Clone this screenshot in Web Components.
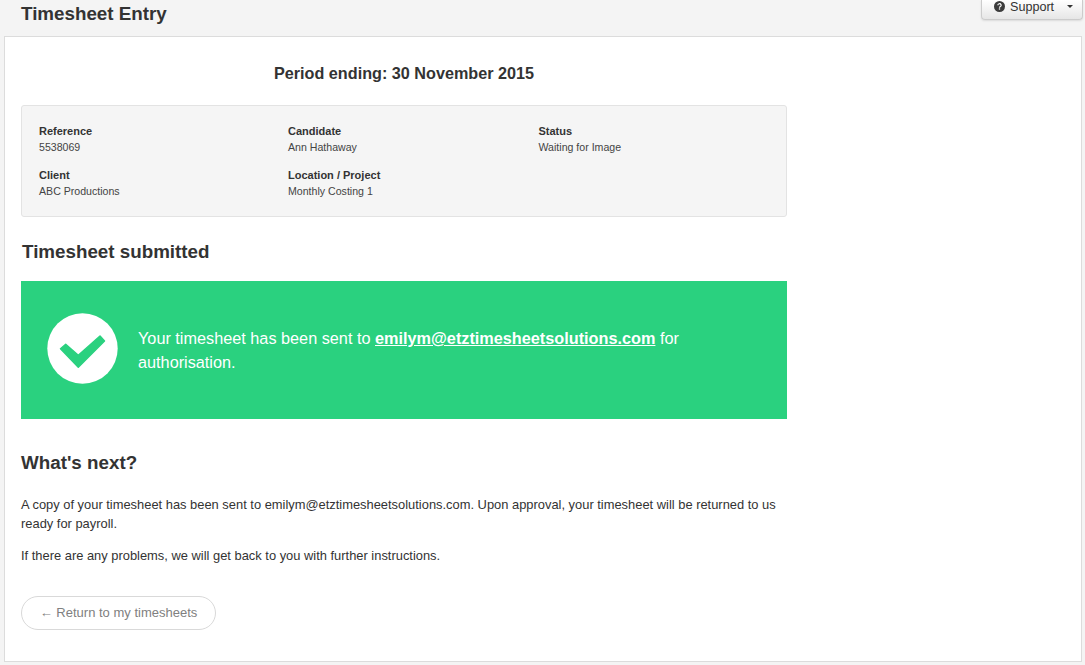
<!DOCTYPE html>
<html>
<head>
<meta charset="utf-8">
<title>Timesheet Entry</title>
<style>
  html, body { margin: 0; height: 100%; overflow: hidden; }
  body { background: #f4f4f4; color: #333; font-family: "Liberation Sans", Arial, sans-serif; }
</style>
</head>
<body>
<timesheet-app>
  <page-header slot="header" heading="Timesheet Entry"></page-header>
  <period-title>Period ending: 30 November 2015</period-title>
  <details-well>
    <detail-item label="Reference" value="5538069"></detail-item>
    <detail-item label="Candidate" value="Ann Hathaway"></detail-item>
    <detail-item label="Status" value="Waiting for Image"></detail-item>
    <detail-item label="Client" value="ABC Productions"></detail-item>
    <detail-item label="Location / Project" value="Monthly Costing 1"></detail-item>
  </details-well>
  <section-title top="24" bottom="18" indent="1">Timesheet submitted</section-title>
  <success-banner>Your timesheet has been sent to <a href="#">emilym@etztimesheetsolutions.com</a> for authorisation.</success-banner>
  <section-title top="33" bottom="21">What's next?</section-title>
  <next-steps>
    <p>A copy of your timesheet has been sent to emilym@etztimesheetsolutions.com. Upon approval, your timesheet will be returned to us ready for payroll.</p>
    <p>If there are any problems, we will get back to you with further instructions.</p>
  </next-steps>
  <return-button>Return to my timesheets</return-button>
</timesheet-app>

<script>
class TimesheetApp extends HTMLElement {
  constructor() {
    super();
    this.attachShadow({ mode: "open" });
    this.shadowRoot.innerHTML = `
      <style>
        :host { display: flex; flex-direction: column; height: 665px; }
        .panel {
          flex: none;
          height: 626px;
          box-sizing: border-box;
          margin: 0 3px 0 4px;
          padding: 0 16px;
          background: #fff;
          border: 1px solid #dcdcdc;
        }
        .content { width: 766px; }
      </style>
      <slot name="header"></slot>
      <div class="panel"><div class="content"><slot></slot></div></div>
    `;
  }
}

class PageHeader extends HTMLElement {
  constructor() {
    super();
    this.attachShadow({ mode: "open" });
    this.shadowRoot.innerHTML = `
      <style>
        :host { display: flex; justify-content: space-between; height: 36px; flex: none; padding-left: 21px; }
        h1 { margin: 0; font-size: 18.8px; line-height: 27px; font-weight: bold; color: #333; }
        button {
          display: flex; align-items: center; gap: 5px;
          height: 20px; width: 102px; box-sizing: border-box;
          margin-right: 2px; padding: 0 0 6px 12px;
          font: 12.6px "Liberation Sans", Arial, sans-serif; color: #333;
          background: linear-gradient(#fff, #e6e6e6);
          border: 1px solid #ccc; border-top: 0; border-radius: 0 0 4px 4px;
          box-shadow: 0 1px 2px rgba(0,0,0,.1);
        }
        svg { flex: none; }
        .caret { width: 0; height: 0; margin-left: 8px; border: 3px solid transparent; border-top-color: #333; border-bottom: 0; }
      </style>
      <h1></h1>
      <button>
        <svg width="11" height="11" viewBox="0 0 12 12">
          <circle cx="6" cy="6" r="6" fill="#3c3c3c"/>
          <path d="M4.2 4.7a1.8 1.7 0 1 1 2.7 1.4c-.6.4-.9.6-.9 1.2" fill="none" stroke="#fff" stroke-width="1.3"/>
          <rect x="5.3" y="8" width="1.4" height="1.4" fill="#fff"/>
        </svg>
        <span>Support</span><i class="caret"></i>
      </button>
    `;
  }

  connectedCallback() {
    this.shadowRoot.querySelector("h1").textContent = this.getAttribute("heading") || "";
  }
}

class PeriodTitle extends HTMLElement {
  constructor() {
    super();
    this.attachShadow({ mode: "open" });
    this.shadowRoot.innerHTML = `
      <style>
        :host { display: block; padding-top: 25px; text-align: center; font-size: 16.2px; line-height: 22px; font-weight: bold; color: #333; }
      </style>
      <slot></slot>
    `;
  }
}

class DetailsWell extends HTMLElement {
  constructor() {
    super();
    this.attachShadow({ mode: "open" });
    this.shadowRoot.innerHTML = `
      <style>
        :host {
          display: grid;
          grid-template-columns: 249px 250.5px 1fr;
          grid-auto-rows: 32px;
          align-content: start;
          row-gap: 12px;
          box-sizing: border-box;
          height: 112px;
          margin-top: 21px;
          padding: 17px 17px 0;
          background: #f5f5f5;
          border: 1px solid #e3e3e3;
          border-radius: 3px;
        }
      </style>
      <slot></slot>
    `;
  }
}

class DetailItem extends HTMLElement {
  constructor() {
    super();
    this.attachShadow({ mode: "open" });
    this.shadowRoot.innerHTML = `
      <style>
        :host { display: block; font-size: 10.6px; line-height: 16px; color: #444; }
        b { display: block; font-size: 11px; color: #333; }
      </style>
      <b></b><span></span>
    `;
  }

  connectedCallback() {
    this.shadowRoot.querySelector("b").textContent = this.getAttribute("label") || "";
    this.shadowRoot.querySelector("span").textContent = this.getAttribute("value") || "";
  }
}

class SectionTitle extends HTMLElement {
  constructor() {
    super();
    this.attachShadow({ mode: "open" });
    this.shadowRoot.innerHTML = `
      <style>
        :host { display: block; font-size: 18.8px; line-height: 22px; font-weight: bold; color: #333; }
      </style>
      <slot></slot>
    `;
  }

  connectedCallback() {
    this.style.marginTop = (this.getAttribute("top") || 0) + "px";
    this.style.marginBottom = (this.getAttribute("bottom") || 0) + "px";
    this.style.paddingLeft = (this.getAttribute("indent") || 0) + "px";
  }
}

class SuccessBanner extends HTMLElement {
  constructor() {
    super();
    this.attachShadow({ mode: "open" });
    this.shadowRoot.innerHTML = `
      <style>
        :host {
          display: flex; align-items: center; gap: 20px;
          height: 138px; box-sizing: border-box; padding: 0 100px 3px 26px;
          background: #2ad17f; color: #fff;
          font-size: 16.25px; line-height: 24px;
        }
        svg { flex: none; }
        div { padding-top: 3px; }
        ::slotted(a) { color: #fff; font-weight: bold; }
      </style>
      <svg width="71" height="71" viewBox="0 0 71 71">
        <circle cx="35.5" cy="35.5" r="35.2" fill="#fff"/>
        <polygon points="13.5,35.7 18.7,31.3 31.3,42.3 53,23 57.5,28 31.3,54.2" fill="#2ad17f" stroke="#2ad17f" stroke-width="1.5" stroke-linejoin="round"/>
      </svg>
      <div><slot></slot></div>
    `;
  }
}

class NextSteps extends HTMLElement {
  constructor() {
    super();
    this.attachShadow({ mode: "open" });
    this.shadowRoot.innerHTML = `
      <style>
        :host { display: block; font-size: 12.9px; line-height: 19px; color: #333; }
        ::slotted(p) { margin: 0 0 13px; }
      </style>
      <slot></slot>
    `;
  }
}

class ReturnButton extends HTMLElement {
  constructor() {
    super();
    this.attachShadow({ mode: "open" });
    this.shadowRoot.innerHTML = `
      <style>
        :host {
          display: inline-block; box-sizing: border-box;
          height: 34px; width: 195px; margin-top: 18px;
          border: 1px solid #d9d9d9; border-radius: 17px;
          text-align: center; font-size: 13px; line-height: 31px; color: #808080;
        }
      </style>
      &larr; <slot></slot>
    `;
  }
}

customElements.define("timesheet-app", TimesheetApp);
customElements.define("page-header", PageHeader);
customElements.define("period-title", PeriodTitle);
customElements.define("details-well", DetailsWell);
customElements.define("detail-item", DetailItem);
customElements.define("section-title", SectionTitle);
customElements.define("success-banner", SuccessBanner);
customElements.define("next-steps", NextSteps);
customElements.define("return-button", ReturnButton);
</script>
</body>
</html>
